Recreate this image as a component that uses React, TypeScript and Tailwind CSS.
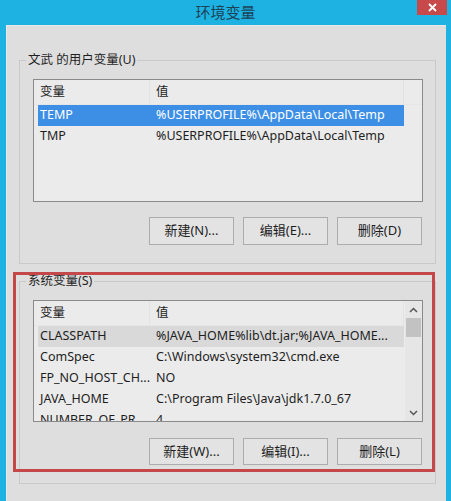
import React from "react";

const font = { fontFamily: '"Noto Sans", "Noto Sans CJK SC", sans-serif' };

function Header() {
  return (
    <div className="flex h-[25px] shrink-0 items-center border-b border-[#e6e6e6] text-[12.5px] text-[#1e1e1e]">
      <div className="flex h-full w-[116px] items-center border-r border-[#e2e2e2] pl-[6px]">变量</div>
      <div className="flex h-full w-[254px] items-center border-r border-[#e2e2e2] pl-[6px]">值</div>
      <div className="flex-1" />
    </div>
  );
}

type Row = { name: string; value: string; sel?: "blue" | "gray" };

function Rows({ rows }: { rows: Row[] }) {
  return (
    <div className="flex shrink-0 flex-col pl-[4px]">
      {rows.map((r) => (
        <div
          key={r.name}
          className={
            "flex h-[21px] w-[366px] shrink-0 items-center text-[12.5px] " +
            (r.sel === "blue"
              ? "bg-[#3d8fe6] text-white"
              : r.sel === "gray"
              ? "bg-[#d9d9d9] text-[#1e1e1e]"
              : "text-[#1e1e1e]")
          }
        >
          <div className="w-[113px] shrink-0 overflow-hidden whitespace-nowrap pl-[2px]">{r.name}</div>
          <div className="flex-1 overflow-hidden whitespace-nowrap pl-[5px]">{r.value}</div>
        </div>
      ))}
    </div>
  );
}

function Btn({ children }: { children: React.ReactNode }) {
  return (
    <div className="flex h-full w-[85px] items-center justify-center border border-[#acacac] bg-[#e3e3e3] text-[13px] text-[#1e1e1e]">
      {children}
    </div>
  );
}

function Group({
  label,
  children,
  className,
}: {
  label: string;
  children: React.ReactNode;
  className: string;
}) {
  return (
    <div className={"relative ml-[12px] w-[417px] border border-[#c9c9c9] " + className}>
      <div className="absolute left-[6px] top-[-10px] bg-[#dedede] px-[2px] text-[12.5px] leading-[18px] text-[#1e1e1e]">
        {label}
      </div>
      {children}
    </div>
  );
}

export default function App() {
  const userRows: Row[] = [
    { name: "TEMP", value: "%USERPROFILE%\\AppData\\Local\\Temp", sel: "blue" },
    { name: "TMP", value: "%USERPROFILE%\\AppData\\Local\\Temp" },
  ];
  const sysRows: Row[] = [
    { name: "CLASSPATH", value: "%JAVA_HOME%lib\\dt.jar;%JAVA_HOME...", sel: "gray" },
    { name: "ComSpec", value: "C:\\Windows\\system32\\cmd.exe" },
    { name: "FP_NO_HOST_CH...", value: "NO" },
    { name: "JAVA_HOME", value: "C:\\Program Files\\Java\\jdk1.7.0_67" },
    { name: "NUMBER_OF_PR...", value: "4" },
  ];
  return (
    <div className="relative flex h-[501px] w-[451px] flex-col bg-[#1db2e2]" style={font}>
      <div className="relative flex h-[25px] shrink-0 items-center justify-center">
        <span className="text-[15px] text-[#1c4257]">环境变量</span>
        <div className="absolute right-[4px] top-0 flex h-[15px] w-[30px] items-center justify-center bg-[#c7494a]">
          <svg width="9" height="9" viewBox="0 0 9 9">
            <path d="M1 1 L8 8 M8 1 L1 8" stroke="#fff" strokeWidth="1.8" />
          </svg>
        </div>
      </div>
      <div className="ml-[6px] mr-[5px] flex flex-1 flex-col border-l border-t border-[#e8e8e8] bg-[#dedede] pt-[34px]">
        <Group label="文武 的用户变量(U)" className="h-[204px]">
          <div className="ml-[13px] mt-[18px] h-[123px] w-[390px] border border-[#8a8a8a] bg-[#ebebeb]">
            <Header />
            <Rows rows={userRows} />
          </div>
          <div className="mr-[13px] mt-[15px] flex h-[28px] justify-end gap-[9px]">
            <Btn>新建(N)...</Btn>
            <Btn>编辑(E)...</Btn>
            <Btn>删除(D)</Btn>
          </div>
        </Group>
        <Group label="系统变量(S)" className="mt-[17px] h-[203px]">
          <div className="ml-[13px] mt-[18px] flex h-[122px] w-[390px] overflow-hidden border border-[#8a8a8a] bg-[#ebebeb]">
            <div className="flex flex-1 flex-col overflow-hidden">
              <Header />
              <Rows rows={sysRows} />
            </div>
            <div className="flex w-[17px] shrink-0 flex-col items-center bg-[#e6e6e6]">
              <div className="flex h-[17px] w-full items-center justify-center">
                <svg width="9" height="6" viewBox="0 0 9 6">
                  <path d="M1 5 L4.5 1.5 L8 5" stroke="#555" strokeWidth="1.5" fill="none" />
                </svg>
              </div>
              <div className="h-[19px] w-[15px] bg-[#c2c2c2]" />
              <div className="flex-1" />
              <div className="flex h-[17px] w-full items-center justify-center">
                <svg width="9" height="6" viewBox="0 0 9 6">
                  <path d="M1 1 L4.5 4.5 L8 1" stroke="#555" strokeWidth="1.5" fill="none" />
                </svg>
              </div>
            </div>
          </div>
          <div className="mr-[13px] mt-[16px] flex h-[27px] justify-end gap-[9px]">
            <Btn>新建(W)...</Btn>
            <Btn>编辑(I)...</Btn>
            <Btn>删除(L)</Btn>
          </div>
        </Group>
      </div>
      <div className="pointer-events-none absolute left-[13px] top-[272px] h-[200px] w-[422px] border-[3px] border-[#c4474a]" />
    </div>
  );
}
